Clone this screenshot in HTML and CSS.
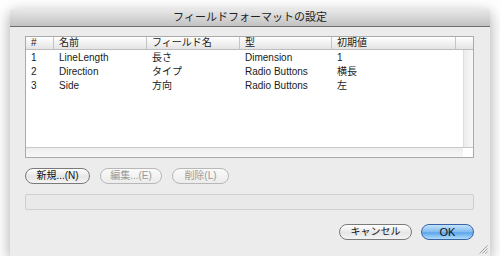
FILE: index.html
```html
<!DOCTYPE html>
<html lang="ja">
<head>
  <meta charset="UTF-8" />
  <title>フィールドフォーマットの設定</title>
  <link rel="stylesheet" href="styles.css">
</head>
<body>
  <div class="window">
    <div class="titlebar">フィールドフォーマットの設定</div>
    <div class="content">
      <div class="listbox">
        <div class="list-main">
          <div class="list-cols">
            <div class="list-head">
              <div class="th c-num">#</div>
              <div class="th c-name">名前</div>
              <div class="th c-field">フィールド名</div>
              <div class="th c-type">型</div>
              <div class="th c-def">初期値</div>
              <div class="th c-end"></div>
            </div>
            <div class="list-body">
              <div class="rows">
                <div class="row">
                  <div class="c-num">1</div>
                  <div class="c-name">LineLength</div>
                  <div class="c-field">長さ</div>
                  <div class="c-type">Dimension</div>
                  <div class="c-def">1</div>
                </div>
                <div class="row">
                  <div class="c-num">2</div>
                  <div class="c-name">Direction</div>
                  <div class="c-field">タイプ</div>
                  <div class="c-type">Radio Buttons</div>
                  <div class="c-def">横長</div>
                </div>
                <div class="row">
                  <div class="c-num">3</div>
                  <div class="c-name">Side</div>
                  <div class="c-field">方向</div>
                  <div class="c-type">Radio Buttons</div>
                  <div class="c-def">左</div>
                </div>
              </div>
              <div class="vscroll"></div>
            </div>
          </div>
        </div>
        <div class="hscroll"><div class="corner"></div></div>
      </div>

      <div class="btn-row">
        <button class="pill new">新規...(N)</button>
        <button class="pill edit" disabled>編集...(E)</button>
        <button class="pill del" disabled>削除(L)</button>
      </div>

      <div class="field"></div>

      <div class="footer-row">
        <button class="pill cancel">キャンセル</button>
        <button class="pill ok">OK</button>
      </div>
    </div>
    <svg class="grip" width="10" height="10" viewBox="0 0 10 10">
      <path d="M9.5 1.5 L1.5 9.5 M9.5 4.5 L4.5 9.5 M9.5 7.5 L7.5 9.5" stroke="#a0a0a0" stroke-width="1"/>
    </svg>
  </div>
</body>
</html>
```

FILE: styles.css
```css
* { margin: 0; padding: 0; box-sizing: border-box; }
body {
  background: #fff;
  font-family: "Liberation Sans", "Noto Sans CJK JP", sans-serif;
  font-size: 10px;
  color: #1a1a1a;
}
.window {
  position: relative;
  margin: 9px 0 0 10px;
  width: 480px;
  height: 247px;
  background: #ececec;
  box-shadow: 0 4px 14px rgba(0,0,0,0.35);
}
.titlebar {
  height: 18px;
  line-height: 17px;
  text-align: center;
  font-size: 11px;
  color: #222;
  background: linear-gradient(#e9e9e9, #c2c2c2);
  border-bottom: 1px solid #6e6e6e;
}
.content {
  padding: 9px 16px 0 15px;
}

/* list */
.listbox {
  height: 122px;
  border: 1px solid #aaa;
  background: #fff;
  display: flex;
  flex-direction: column;
}
.list-main { flex: 1; display: flex; min-height: 0; }
.list-cols { flex: 1; display: flex; flex-direction: column; }
.list-head {
  display: flex;
  height: 13px;
  line-height: 12px;
  background: linear-gradient(#fff, #e4e4e4);
  border-bottom: 1px solid #bdbdbd;
}
.th { border-right: 1px solid #c4c4c4; padding-left: 5px; }
.list-body { flex: 1; display: flex; }
.rows { flex: 1; padding-top: 1px; }
.row { display: flex; height: 14px; line-height: 14px; }
.row > div { padding-left: 5px; }
.c-num { width: 28px; }
.c-name { width: 93px; }
.c-field { width: 93px; }
.c-type { width: 92px; }
.c-def { width: 124px; }
.c-end { flex: 1; border-right: none; }
.vscroll {
  width: 10px;
  background: linear-gradient(90deg, #ececec, #f8f8f8);
  border-left: 1px solid #ddd;
}
.hscroll {
  height: 10px;
  border-top: 1px solid #c8c8c8;
  background: linear-gradient(#eee, #f7f7f7);
  display: flex;
  justify-content: flex-end;
}
.corner { width: 10px; background: #fff; }

/* buttons */
.btn-row {
  display: flex;
  gap: 10px;
  margin-top: 10px;
}
.pill {
  height: 16px;
  padding: 0;
  white-space: nowrap;
  border: 1px solid #7a7a7a;
  border-radius: 8px;
  background: linear-gradient(#fff, #e6e6e6 55%, #f4f4f4);
  font-family: "Liberation Sans", "Noto Sans CJK JP", sans-serif;
  font-size: 10px;
  color: #111;
  line-height: 14px;
}
.new { width: 65px; }
.edit { width: 62px; }
.del { width: 57px; }
.pill:disabled {
  color: #9a9a9a;
  border-color: #b8b8b8;
  background: linear-gradient(#fafafa, #ececec);
}
.field {
  margin-top: 10px;
  height: 16px;
  border: 1px solid #cfcfcf;
  border-radius: 2px;
  background: #e9e9e9;
}
.footer-row {
  display: flex;
  justify-content: flex-end;
  gap: 9px;
  margin-top: 14px;
}
.cancel { width: 73px; }
.ok {
  width: 53px;
  font-size: 11px;
  border-color: #3a63a6;
  background: linear-gradient(#c4e3fc, #7fbaf0 50%, #5ba5ea 55%, #b0defc);
}
.grip { position: absolute; right: 2px; bottom: 2px; }
```
